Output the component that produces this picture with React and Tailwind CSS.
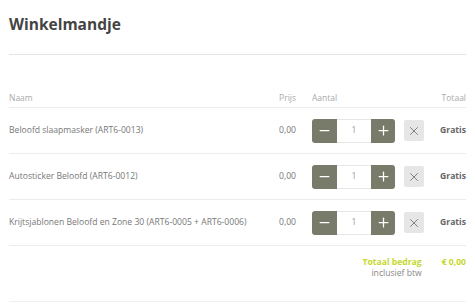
import { Minus, Plus, X } from "lucide-react";

const items = [
  { id: 1, name: "Beloofd slaapmasker (ART6-0013)" },
  { id: 2, name: "Autosticker Beloofd (ART6-0012)" },
  { id: 3, name: "Krijtsjablonen Beloofd en Zone 30 (ART6-0005 + ART6-0006)" },
];

function Stepper() {
  return (
    <div className="flex h-[24px] items-stretch">
      <button className="flex w-[25px] items-center justify-center rounded-l-[3px] bg-[#787b69] text-white">
        <Minus size={15} strokeWidth={2} />
      </button>
      <div className="flex w-[34px] items-center justify-center border-y border-[#e6e6e6] bg-white text-[8.5px] text-[#999]">
        1
      </div>
      <button className="flex w-[24px] items-center justify-center rounded-r-[3px] bg-[#787b69] text-white">
        <Plus size={15} strokeWidth={2} />
      </button>
    </div>
  );
}

export default function App() {
  return (
    <div
      className="h-[306px] w-[475px] bg-white px-[9px] pt-[14px] text-[#777]"
      style={{ fontFamily: '"Open Sans", sans-serif' }}
    >
      <h1 className="text-[15.5px] font-bold leading-[20px] text-[#444]">Winkelmandje</h1>
      <div className="mt-[20px] border-t border-[#e4e4e4]" />

      <div className="mt-[34px] flex h-[19px] items-center border-b border-[#ececec] text-[8.5px] text-[#aaa]">
        <div className="flex-1">Naam</div>
        <div className="w-[40px] text-right">Prijs</div>
        <div className="ml-[16px] w-[112px]">Aantal</div>
        <div className="w-[42px] text-right">Totaal</div>
      </div>

      {items.map((item) => (
        <div
          key={item.id}
          className="flex h-[46px] items-center border-b border-[#ececec] text-[8.6px]"
        >
          <div className="flex-1">{item.name}</div>
          <div className="w-[40px] text-right">0,00</div>
          <div className="ml-[16px] flex w-[112px] items-center">
            <Stepper />
            <button className="ml-[9px] flex h-[21px] w-[20px] items-center justify-center rounded-[2px] bg-[#e6e6e6] text-[#7a7a7a]">
              <X size={14} strokeWidth={1.6} />
            </button>
          </div>
          <div className="w-[42px] text-right font-bold text-[#666]">Gratis</div>
        </div>
      ))}

      <div className="flex h-[56px] justify-end border-b border-[#f0f0f0] pt-[11px] text-[8.6px]">
        <div className="flex flex-col items-end leading-[11px]">
          <span className="font-bold text-[#c5d92e]">Totaal bedrag</span>
          <span className="text-[#888]">inclusief btw</span>
        </div>
        <div className="ml-[20px] font-bold leading-[11px] text-[#c5d92e]">€ 0,00</div>
      </div>
    </div>
  );
}
